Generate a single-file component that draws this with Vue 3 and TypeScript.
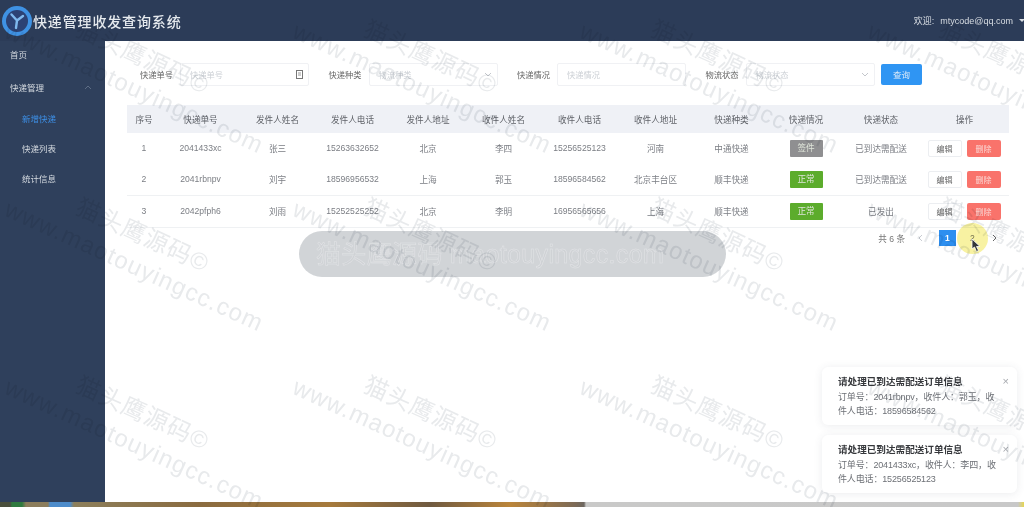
<template>
  <div class="page">
    <header class="topbar">
      <div class="brand">
        <svg class="logo" width="32" height="32" viewBox="0 0 32 32">
          <circle cx="16" cy="16" r="15" fill="#3f92e4" />
          <circle cx="16" cy="16" r="11" fill="#2c4275" />
          <path d="M10.5 9.5 L16 15.5 M22 11 L16 15.5 L15 23" fill="none" stroke="#7fb8ee" stroke-width="2.4" stroke-linecap="round" />
        </svg>
        <span class="brand-title">快递管理收发查询系统</span>
      </div>
      <div class="user">
        <span class="welcome">欢迎:</span>
        <span>mtycode@qq.com</span>
        <i class="user-caret"></i>
      </div>
    </header>

    <div class="body">
      <aside class="sidebar">
        <div class="menu-item">首页</div>
        <div class="menu-item menu-parent">
          快递管理
          <svg width="8" height="5" viewBox="0 0 8 5"><path d="M1 4 L4 1 L7 4" fill="none" stroke="#5d6d85" stroke-width="1" /></svg>
        </div>
        <div
          v-for="sub in subMenus"
          :key="sub"
          class="menu-sub"
          :class="{ active: sub === '新增快递' }"
        >
          {{ sub }}
        </div>
      </aside>

      <main class="content">
        <div class="filters">
          <div v-for="f in filters" :key="f.label" class="filter">
            <label>{{ f.label }}</label>
            <div class="field">
              <span>{{ f.placeholder }}</span>
              <svg v-if="f.kind === 'input'" width="7" height="9" viewBox="0 0 7 9"><rect x="0.5" y="0.5" width="6" height="8" fill="none" stroke="#777" /><path d="M2 3 H5 M2 5 H5" stroke="#999" /></svg>
              <svg v-if="f.kind === 'select'" width="8" height="5" viewBox="0 0 8 5"><path d="M1 1 L4 4 L7 1" fill="none" stroke="#c4c7cc" /></svg>
            </div>
          </div>
          <button class="search">查询</button>
        </div>

        <table class="grid">
          <colgroup>
            <col v-for="(w, i) in colWidths" :key="i" :style="{ width: w + 'px' }" />
          </colgroup>
          <thead>
            <tr>
              <th v-for="h in headers" :key="h">{{ h }}</th>
            </tr>
          </thead>
          <tbody>
            <tr v-for="r in rows" :key="r.no">
              <td>{{ r.no }}</td>
              <td>{{ r.code }}</td>
              <td>{{ r.sender }}</td>
              <td>{{ r.senderTel }}</td>
              <td>{{ r.senderAddr }}</td>
              <td>{{ r.receiver }}</td>
              <td>{{ r.receiverTel }}</td>
              <td>{{ r.receiverAddr }}</td>
              <td>{{ r.kind }}</td>
              <td><span class="tag" :class="r.tagClass">{{ r.tag }}</span></td>
              <td>{{ r.status }}</td>
              <td>
                <div class="ops">
                  <button class="btn-edit">编辑</button>
                  <button class="btn-del">删除</button>
                </div>
              </td>
            </tr>
          </tbody>
        </table>

        <div class="pager">
          <span class="total">共 6 条</span>
          <svg class="prev" width="5" height="8" viewBox="0 0 5 8"><path d="M4 1 L1 4 L4 7" fill="none" stroke="#c9ccd2" /></svg>
          <span class="page-on">1</span>
          <span class="page-num">2</span>
          <svg width="5" height="8" viewBox="0 0 5 8"><path d="M1 1 L4 4 L1 7" fill="none" stroke="#666" /></svg>
        </div>
      </main>
    </div>

    <div class="taskbar"></div>

    <!-- things lying over the page -->
    <div class="pointer-glow"></div>
    <svg class="cursor" width="11" height="15" viewBox="0 0 11 15">
      <path d="M1 1 L1 11 L3.5 9 L5.5 13.5 L7.5 12.5 L5.5 8.5 L9 8.5 Z" fill="#33363a" stroke="#fff" stroke-width="0.8" />
    </svg>

    <div
      v-for="(n, i) in notices"
      :key="i"
      class="notice"
      :style="{ top: n.top + 'px' }"
    >
      <div class="notice-title">请处理已到达需配送订单信息</div>
      <div class="notice-text">{{ n.text }}</div>
      <span class="notice-close">×</span>
    </div>

    <div class="site-toast">猫头鹰源码 maotouyingcc.com</div>

    <div class="marks">
      <template v-for="(m, i) in marks" :key="i">
        <span class="mark-url" :style="{ left: m.x + 'px', top: m.y + 'px' }">www.maotouyingcc.com</span>
        <span class="mark-cn" :style="{ left: m.x + 71 + 'px', top: m.y - 2 + 'px' }">猫头鹰源码©</span>
      </template>
    </div>
  </div>
</template>

<script setup lang="ts">
interface Filter {
  label: string;
  placeholder: string;
  kind: 'input' | 'select' | 'plain';
}

interface Row {
  no: number;
  code: string;
  sender: string;
  senderTel: string;
  senderAddr: string;
  receiver: string;
  receiverTel: string;
  receiverAddr: string;
  kind: string;
  tag: string;
  tagClass: string;
  status: string;
}

const subMenus = ['新增快递', '快递列表', '统计信息'];

const filters: Filter[] = [
  { label: '快递单号', placeholder: '快递单号', kind: 'input' },
  { label: '快递种类', placeholder: '物流种类', kind: 'select' },
  { label: '快递情况', placeholder: '快递情况', kind: 'plain' },
  { label: '物流状态', placeholder: '物流状态', kind: 'select' },
];

const colWidths = [34, 79, 75, 75, 76, 75, 77, 75, 77, 72, 78, 89];

const headers = [
  '序号', '快递单号', '发件人姓名', '发件人电话', '发件人地址', '收件人姓名',
  '收件人电话', '收件人地址', '快递种类', '快递情况', '快递状态', '操作',
];

const rows: Row[] = [
  {
    no: 1, code: '2041433xc', sender: '张三', senderTel: '15263632652', senderAddr: '北京',
    receiver: '李四', receiverTel: '15256525123', receiverAddr: '河南', kind: '中通快递',
    tag: '签件', tagClass: 'tag-grey', status: '已到达需配送',
  },
  {
    no: 2, code: '2041rbnpv', sender: '刘宇', senderTel: '18596956532', senderAddr: '上海',
    receiver: '郭玉', receiverTel: '18596584562', receiverAddr: '北京丰台区', kind: '顺丰快递',
    tag: '正常', tagClass: 'tag-green', status: '已到达需配送',
  },
  {
    no: 3, code: '2042pfph6', sender: '刘雨', senderTel: '15252525252', senderAddr: '北京',
    receiver: '李明', receiverTel: '16956565656', receiverAddr: '上海', kind: '顺丰快递',
    tag: '正常', tagClass: 'tag-green', status: '已发出',
  },
];

const notices = [
  { top: 367, text: '订单号：2041rbnpv，收件人：郭玉，收件人电话：18596584562' },
  { top: 435, text: '订单号：2041433xc，收件人：李四，收件人电话：15256525123' },
];

// watermark repeats on a fixed pitch
const marks: { x: number; y: number }[] = [];
for (let row = 0; row < 3; row++) {
  for (let col = 0; col < 4; col++) {
    marks.push({ x: 12 + col * 287.5, y: 17 + row * 178 });
  }
}
</script>

<style scoped>
.page {
  position: relative;
  width: 1024px;
  height: 507px;
  display: flex;
  flex-direction: column;
  overflow: hidden;
  background: #fff;
  font-family: "Liberation Sans", "Noto Sans CJK SC", sans-serif;
  filter: blur(0.55px);
}

.topbar {
  flex: none;
  height: 41px;
  display: flex;
  align-items: center;
  justify-content: space-between;
  background: #2c3c58;
  color: #e6eaee;
}

.brand {
  display: flex;
  align-items: center;
  gap: 0;
  padding-left: 1px;
}

.logo {
  flex: none;
}

.brand-title {
  font-size: 14px;
  font-weight: 500;
  letter-spacing: 0.85px;
}

.user {
  display: flex;
  align-items: center;
  gap: 6px;
  font-size: 9px;
  color: #d8dde3;
}

.user-caret {
  width: 0;
  height: 0;
  margin-right: -1px;
  border-left: 3px solid transparent;
  border-right: 3px solid transparent;
  border-top: 3px solid #d8dde3;
}

.body {
  flex: 1;
  min-height: 0;
  display: flex;
}

.sidebar {
  flex: none;
  width: 105px;
  background: #2f405c;
  font-size: 8.5px;
  color: #d5dae0;
}

.menu-item {
  height: 26px;
  margin-bottom: 7px;
  padding: 0 13px 0 10px;
  display: flex;
  align-items: center;
  justify-content: space-between;
}

.menu-parent {
  margin-bottom: 3px;
}

.menu-sub {
  height: 30px;
  padding-left: 22px;
  display: flex;
  align-items: center;
}

.menu-sub.active {
  color: #3d8fe6;
}

.content {
  flex: 1;
  min-width: 0;
  padding: 22px 15px 0 22px;
}

.filters {
  display: flex;
  align-items: center;
  padding-left: 13px;
  height: 23px;
  gap: 19.5px;
}

.filter {
  display: flex;
  align-items: center;
  gap: 7px;
  font-size: 8.25px;
  color: #666;
}

.filter label,
.field span {
  padding-bottom: 2px;
}

.field {
  width: 129px;
  height: 23px;
  box-sizing: border-box;
  border: 1px solid #f0f1f4;
  border-radius: 2px;
  padding: 0 5px 0 9px;
  display: flex;
  align-items: center;
  justify-content: space-between;
  color: #ccd0d5;
}

.search {
  width: 41px;
  height: 21px;
  margin-left: -13px;
  border: none;
  border-radius: 2px;
  background: #2f95f3;
  color: #dbe9f8;
  font: inherit;
  font-size: 8.5px;
  padding: 0 0 2px;
}

.grid {
  width: 882px;
  margin-top: 19px;
  border-collapse: collapse;
  table-layout: fixed;
  font-size: 8.6px;
  color: #7b7e84;
}

.grid th {
  height: 27px;
  padding: 0 0 1px;
  background: #eff1f6;
  font-weight: 400;
  color: #5f6268;
}

.grid td {
  height: 30px;
  padding: 0 0 1px;
  text-align: center;
}

.grid tbody tr:nth-child(n + 2) td {
  border-bottom: 1px solid #eff1f3;
}

.tag {
  display: inline-block;
  width: 33px;
  height: 17px;
  line-height: 17px;
  border-radius: 1px;
  color: #dfe5d9;
}

.tag-grey {
  background: #8f8f91;
}

.tag-green {
  background: #5cac2c;
}

.ops {
  display: flex;
  justify-content: center;
  gap: 5px;
  padding-right: 1px;
}

.ops button {
  width: 34px;
  height: 17px;
  padding: 0;
  border-radius: 2px;
  font: inherit;
  font-size: 8px;
}

.btn-edit {
  border: 1px solid #eceef1;
  background: #fff;
  color: #666;
}

.btn-del {
  border: none;
  background: #f9736b;
  color: #fbd9d6;
}

.pager {
  display: flex;
  align-items: center;
  height: 16px;
  margin-top: 2px;
  width: 882px;
  font-size: 8.6px;
  color: #777;
  justify-content: flex-end;
  padding-right: 12px;
  box-sizing: border-box;
}

.total {
  margin-right: 13px;
}

.prev {
  margin-right: 16px;
}

.page-on {
  width: 17px;
  height: 16px;
  line-height: 16px;
  text-align: center;
  background: #2d8ff0;
  color: #fff;
  font-weight: 700;
}

.page-num {
  width: 17px;
  margin: 0 11px 0 8px;
  text-align: center;
}

.taskbar {
  flex: none;
  height: 5px;
  background: linear-gradient(90deg, #4a4f3c 0, #4a4f3c 10px, #2f7a3f 12px, #2f7a3f 22px, #8c7d5c 26px, #8c7d5c 48px, #4d8ccb 50px, #4d8ccb 70px, #8d7f5b 74px, #8a6b3f 200px, #a67a3c 330px, #6f5a40 430px, #bb853a 510px, #7d6a56 575px, #6d6760 584px, #c9c9c8 586px, #c8c8c8 1018px, #e6d64f 1024px);
}

.pointer-glow {
  position: absolute;
  left: 957px;
  top: 223px;
  width: 31px;
  height: 31px;
  border-radius: 50%;
  background: #f8f2a2;
  mix-blend-mode: multiply;
}

.cursor {
  position: absolute;
  left: 971px;
  top: 238px;
}

.notice {
  position: absolute;
  left: 822px;
  width: 195px;
  height: 58px;
  box-sizing: border-box;
  padding: 8px 14px 0 16px;
  border-radius: 6px;
  background: #fff;
  box-shadow: 0 1px 8px rgba(60, 70, 90, 0.1);
}

.notice-title {
  font-size: 9.6px;
  line-height: 13px;
  font-weight: 700;
  color: #36383c;
}

.notice-text {
  margin-top: 2px;
  font-size: 9px;
  line-height: 14px;
  letter-spacing: -0.15px;
  color: #6d7076;
}

.notice-close {
  position: absolute;
  right: 8px;
  top: 8px;
  font-size: 11px;
  line-height: 13px;
  color: #a6a9ae;
}

.site-toast {
  position: absolute;
  left: 299px;
  top: 231px;
  width: 427px;
  height: 46px;
  box-sizing: border-box;
  padding-left: 17px;
  border-radius: 23px;
  background: rgba(204, 207, 211, 0.9);
  font-size: 25px;
  line-height: 46px;
  letter-spacing: 0.35px;
  white-space: nowrap;
  color: #cfd2d5;
  -webkit-text-stroke: 0.5px #e3e4e7;
}

.marks {
  position: absolute;
  inset: 0;
  pointer-events: none;
  mix-blend-mode: multiply;
}

.mark-url,
.mark-cn {
  position: absolute;
  white-space: nowrap;
  transform: rotate(24.5deg);
  transform-origin: left top;
  color: #e8eaec;
}

.mark-url {
  font-size: 24px;
  line-height: 28px;
  letter-spacing: 1.2px;
}

.mark-cn {
  font-size: 24px;
  line-height: 28px;
  letter-spacing: 1px;
}
</style>

<style>
html,
body {
  margin: 0;
  background: #fff;
}
</style>
